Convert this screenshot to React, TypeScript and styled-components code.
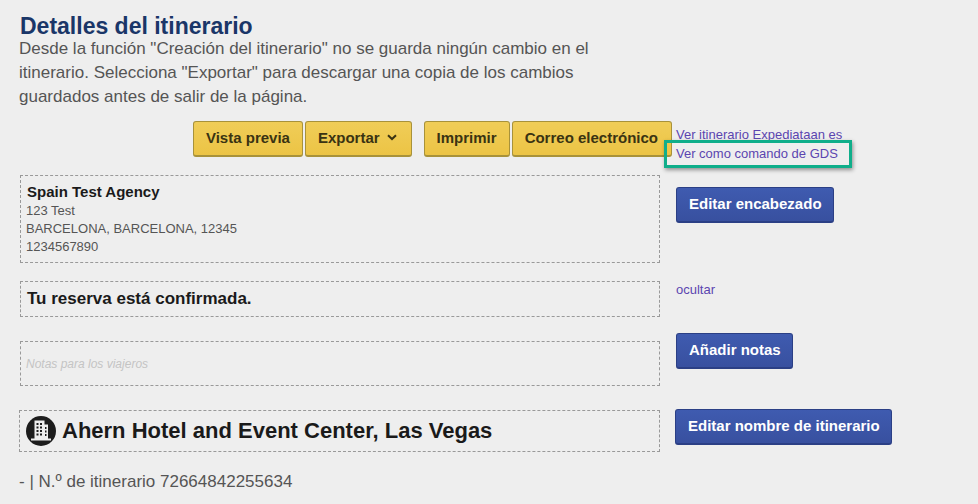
import React from 'react';
import styled, { createGlobalStyle } from 'styled-components';

const Global = createGlobalStyle`
  html, body { margin: 0; padding: 0; background: #eeeeee; }
  body { font-family: "Liberation Sans", Arial, sans-serif; }
`;

const Page = styled.div`
  position: relative;
  width: 978px;
  height: 504px;
  overflow: hidden;
  padding: 14px 0 0 20px;
  box-sizing: border-box;
`;

const Title = styled.h1`
  margin: 0 0 -1px;
  font-size: 23px;
  line-height: 24px;
  font-weight: bold;
  color: #1a3668;
`;

const Intro = styled.p`
  margin: 0 0 0 -1px;
  width: 600px;
  font-size: 17px;
  line-height: 24px;
  color: #555;
`;

const Row = styled.div<{ $top: number }>`
  display: grid;
  grid-template-columns: 640px auto;
  column-gap: 16px;
  align-items: start;
  margin-top: ${p => p.$top}px;
`;

const Toolbar = styled.div`
  display: flex;
  justify-content: flex-end;
  gap: 2px;
  margin-right: -12px;
`;

const ToolbarGap = styled.span`
  width: 8px;
`;

const Button = styled.button<{ $right?: number }>`
  height: 36px;
  padding: 0 ${p => p.$right ?? 12}px 2px 12px;
  border: 1px solid #a8923a;
  border-bottom-width: 2px;
  border-radius: 3px;
  background: linear-gradient(#f0cd58, #ecc445);
  color: #3a3312;
  font: bold 15px "Liberation Sans", Arial, sans-serif;
  display: inline-flex;
  align-items: center;
  gap: 7px;
  white-space: nowrap;
`;

const BlueButton = styled.button<{ $offset?: number; $shift?: number }>`
  height: 36px;
  padding: 0 11px 2px 12px;
  justify-self: start;
  border: 1px solid #2b3f85;
  border-bottom-width: 2px;
  border-radius: 3px;
  background: linear-gradient(#3f5bb0, #38509f);
  color: #fff;
  font: bold 15px "Liberation Sans", Arial, sans-serif;
  margin-top: ${p => p.$offset ?? 0}px;
  margin-left: ${p => p.$shift ?? 0}px;
  white-space: nowrap;
`;

const LinkStack = styled.div`
  display: flex;
  flex-direction: column;
  padding-top: 4px;
`;

const TextLink = styled.a<{ $offset?: number }>`
  color: #5b45b0;
  text-decoration: none;
  font-size: 13px;
  line-height: 20px;
  margin-top: ${p => p.$offset ?? 0}px;
`;

const Dashed = styled.div<{ $height: number; $shift?: number }>`
  box-sizing: border-box;
  height: ${p => p.$height}px;
  margin-left: ${p => p.$shift ?? 0}px;
  border: 1px dashed #999;
  display: flex;
  align-items: center;
`;

const AgencyBox = styled(Dashed)`
  display: block;
  padding: 7px 5px;
  font-size: 13px;
  line-height: 18px;
  color: #555;
`;

const AgencyName = styled.div`
  padding-left: 1px;
  margin-bottom: 1px;
  font-size: 15px;
  font-weight: bold;
  color: #1a1a1a;
`;

const Confirmed = styled.div`
  padding-left: 6px;
  font-size: 17px;
  font-weight: bold;
  color: #1a1a1a;
`;

const NotesHint = styled.div`
  padding-left: 5px;
  font-size: 12px;
  font-style: italic;
  color: #c4c4c4;
`;

const HotelName = styled.div`
  display: flex;
  align-items: center;
  gap: 6px;
  padding-left: 6px;
  font-size: 22px;
  font-weight: bold;
  color: #1a1a1a;
`;

const IconCircle = styled.svg`
  width: 30px;
  height: 30px;
  flex: none;
`;

const Footer = styled.div`
  margin: 20px 0 0 -1px;
  font-size: 17px;
  line-height: 20px;
  color: #555;
`;

const Highlight = styled.div`
  position: absolute;
  left: 664px;
  top: 140px;
  width: 188px;
  height: 28px;
  box-sizing: border-box;
  border: 3px solid #0fae8a;
  box-shadow: 1px 2px 4px rgba(0, 0, 0, 0.4);
  pointer-events: none;
`;

function Chevron() {
  return (
    <svg width="10" height="7" viewBox="0 0 10 7" fill="none" stroke="#3a3312" strokeWidth="2">
      <path d="M1 1.2 L5 5 L9 1.2" />
    </svg>
  );
}

function HotelIcon() {
  return (
    <IconCircle viewBox="0 0 30 30">
      <circle cx="15" cy="15" r="15" fill="#1c1c1c" />
      <path
        fill="#eee"
        fillRule="evenodd"
        d="M8.5 4.5h10v4H22v14h3v2H5v-2h3.5zM10.5 7v2h2V7zm3.5 0v2h2V7zM10.5 10.5v2h2v-2zm3.5 0v2h2v-2zM10.5 14v2h2v-2zm3.5 0v2h2v-2zM10.5 17.5v2h2v-2zm3.5 0v2h2v-2zM19 11v2h1.5v-2zm0 3.5v2h1.5v-2zm0 3.5v2h1.5v-2z"
      />
    </IconCircle>
  );
}

export default function App() {
  return (
    <Page>
      <Global />
      <Title>Detalles del itinerario</Title>
      <Intro>
        Desde la función "Creación del itinerario" no se guarda ningún cambio en el itinerario.
        Selecciona "Exportar" para descargar una copia de los cambios guardados antes de salir de
        la página.
      </Intro>

      <Row $top={12}>
        <Toolbar>
          <Button>Vista previa</Button>
          <Button $right={14}>
            Exportar <Chevron />
          </Button>
          <ToolbarGap />
          <Button>Imprimir</Button>
          <Button $right={13}>Correo electrónico</Button>
        </Toolbar>
        <LinkStack>
          <TextLink>Ver itinerario Expediataan es</TextLink>
          <TextLink $offset={-1}>Ver como comando de GDS</TextLink>
        </LinkStack>
      </Row>

      <Row $top={11}>
        <AgencyBox $height={88}>
          <AgencyName>Spain Test Agency</AgencyName>
          123 Test
          <br />
          BARCELONA, BARCELONA, 12345
          <br />
          1234567890
        </AgencyBox>
        <BlueButton $offset={12}>Editar encabezado</BlueButton>
      </Row>

      <Row $top={18}>
        <Dashed $height={36}>
          <Confirmed>Tu reserva está confirmada.</Confirmed>
        </Dashed>
        <TextLink $offset={-1}>ocultar</TextLink>
      </Row>

      <Row $top={24}>
        <Dashed $height={45}>
          <NotesHint>Notas para los viajeros</NotesHint>
        </Dashed>
        <BlueButton $offset={-8}>Añadir notas</BlueButton>
      </Row>

      <Row $top={24}>
        <Dashed $height={42} $shift={-1}>
          <HotelName>
            <HotelIcon />
            Ahern Hotel and Event Center, Las Vegas
          </HotelName>
        </Dashed>
        <BlueButton $offset={-1} $shift={-1}>
          Editar nombre de itinerario
        </BlueButton>
      </Row>

      <Footer>- | N.º de itinerario 72664842255634</Footer>
      <Highlight />
    </Page>
  );
}
